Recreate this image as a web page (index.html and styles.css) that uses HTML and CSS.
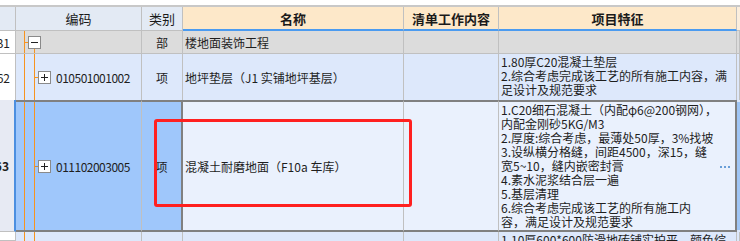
FILE: index.html
```html
<!DOCTYPE html>
<html lang="zh">
<head>
<meta charset="utf-8">
<title>清单</title>
<link rel="stylesheet" href="styles.css">
</head>
<body>
<div class="grid">
  <div class="cell hd"></div>
  <div class="cell hd">编码</div>
  <div class="cell hd">类别</div>
  <div class="cell hd warm">名称</div>
  <div class="cell hd warm">清单工作内容</div>
  <div class="cell hd warm">项目特征</div>
  <div class="cell hd edge"></div>

  <div class="cell num">B1</div>
  <div class="cell r1 code lvl1"><span class="link link1"></span><svg class="tbox" width="13" height="13" viewBox="0 0 13 13"><rect x="0.5" y="0.5" width="12" height="12" fill="#fff" stroke="#8a8a8a"/><line x1="3" y1="6.5" x2="10" y2="6.5" stroke="#222"/></svg></div>
  <div class="cell r1 mid">部</div>
  <div class="cell r1 name">楼地面装饰工程</div>
  <div class="cell r1"></div>
  <div class="cell r1"></div>
  <div class="cell r1"></div>

  <div class="cell num r2n">62</div>
  <div class="cell r2 code lvl2"><span class="link link2"></span><svg class="tbox" width="13" height="13" viewBox="0 0 13 13"><rect x="0.5" y="0.5" width="12" height="12" fill="#fff" stroke="#8a8a8a"/><line x1="3" y1="6.5" x2="10" y2="6.5" stroke="#222"/><line x1="6.5" y1="3" x2="6.5" y2="10" stroke="#222"/></svg><span class="codetxt">010501001002</span></div>
  <div class="cell r2 mid">项</div>
  <div class="cell r2 name">地坪垫层（J1 实铺地坪基层）</div>
  <div class="cell r2"></div>
  <div class="cell r2 feat">1.80厚C20混凝土垫层<br>2.综合考虑完成该工艺的所有施工内容，满<br>足设计及规范要求</div>
  <div class="cell r2"></div>

  <div class="cell num r3n">63</div>
  <div class="cell r3 sel code lvl2"><span class="link link2"></span><svg class="tbox" width="13" height="13" viewBox="0 0 13 13"><rect x="0.5" y="0.5" width="12" height="12" fill="#fff" stroke="#8a8a8a"/><line x1="3" y1="6.5" x2="10" y2="6.5" stroke="#222"/><line x1="6.5" y1="3" x2="6.5" y2="10" stroke="#222"/></svg><span class="codetxt">011102003005</span></div>
  <div class="cell r3 sel mid selend">项</div>
  <div class="cell r3 name">混凝土耐磨地面（F10a 车库）</div>
  <div class="cell r3"></div>
  <div class="cell r3 feat rowend">1.C20细石混凝土（内配φ6@200钢网），<br>内配金刚砂5KG/M3<br>2.厚度:综合考虑，最薄处50厚，3%找坡<br>3.设纵横分格缝，间距4500，深15，缝<br>宽5~10，缝内嵌密封膏<br>4.素水泥浆结合层一遍<br>5.基层清理<br>6.综合考虑完成该工艺的所有施工内<br>容，满足设计及规范要求<svg class="more" width="10" height="2" viewBox="0 0 10 2"><rect x="0" y="0" width="2" height="2" fill="#6a9fd8"/><rect x="4" y="0" width="2" height="2" fill="#6a9fd8"/><rect x="8" y="0" width="2" height="2" fill="#6a9fd8"/></svg></div>
  <div class="cell r3edge"></div>

  <div class="cell num"></div>
  <div class="cell r4 code lvl2"></div>
  <div class="cell r4"></div>
  <div class="cell r4"></div>
  <div class="cell r4"></div>
  <div class="cell r4 feat">1.10厚600*600防滑地砖铺实拍平，颜色综</div>
  <div class="cell r4"></div>
</div>
<div class="mark"></div>
</body>
</html>
```

FILE: styles.css
```css
body {
  margin: 0;
  width: 740px;
  height: 241px;
  overflow: hidden;
  position: relative;
  background: #ffffff;
  font-family: "Noto Sans CJK SC", sans-serif;
  font-size: 12px;
  color: #1e1e1e;
}

.grid {
  margin-top: 5px;
  border-top: 2px solid #c8c8c8;
  display: grid;
  grid-template-columns: 16px 126px 41px 221px 95px 238px 1fr;
  grid-template-rows: 24px 23px 46px 132px 9px;
}

.cell {
  box-sizing: border-box;
  border-right: 1px solid #c0c0c0;
  border-bottom: 1px solid #c0c0c0;
  overflow: hidden;
  white-space: nowrap;
  display: flex;
  align-items: center;
  min-width: 0;
}

.hd {
  background: #e3eaf4;
  justify-content: center;
  font-size: 13px;
  color: #1a1a1a;
}

.hd.warm {
  background: #fde8c9;
  border-bottom: 2px solid #4b9bf0;
  font-weight: bold;
}

.hd.edge {
  background: #fbeedd;
  border-right: none;
}

.num {
  background: #ffffff;
  justify-content: flex-end;
  padding-right: 5px;
  font-size: 12px;
}

.r2n {
  border-bottom: none;
}

.r3n {
  background: #e7eaf3;
  border-right: 2px solid #4c8fe0;
  font-weight: bold;
}

.r1 { background: #dcdcdc; }
.r2 { background: #dde8fb; border-bottom: none; }
.r4 { background: #dde8fb; border-bottom: none; }

.r3 {
  background: #eaf1fd;
  border-top: 2px solid #808080;
  border-bottom: 2px solid #808080;
}

.r3.sel { background-color: #9fc7fb; }

.selend { border-right: 2px solid #808080; }
.rowend { border-right: 2px solid #808080; }

.r3edge {
  background: #9fc5f5;
  border-right: none;
  border-top: 2px solid #dde8fb;
  border-bottom: 2px solid #dde8fb;
}

.mid { justify-content: center; }

.name { padding-left: 2px; }

.code {
  background-repeat: no-repeat;
}

.lvl1 {
  background-image: linear-gradient(#f7931e, #f7931e), linear-gradient(#f7931e, #f7931e);
  background-size: 1px 100%, 1px 100%;
  background-position: 8px 0, 18px 16px;
  padding-left: 9px;
}

.lvl2 {
  background-image: linear-gradient(#f7931e, #f7931e), linear-gradient(#f7931e, #f7931e);
  background-size: 1px 100%, 1px 100%;
  background-position: 8px 0, 18px 0;
  padding-left: 19px;
}

.r3.lvl2 {
  background-size: 1px 140%, 1px 140%;
  background-position: 8px -10px, 18px -10px;
}

.link {
  display: block;
  width: 3px;
  height: 1px;
  background: #f7931e;
  flex: none;
}

.r3 .link { background: #c08a50; }

.tbox {
  display: block;
  flex: none;
}

.codetxt {
  margin-left: 5px;
  letter-spacing: -0.5px;
}

.feat {
  display: block;
  position: relative;
  padding: 1px 2px;
  line-height: 14px;
}

.more {
  position: absolute;
  right: 5px;
  top: 64px;
}

.mark {
  position: absolute;
  left: 154px;
  top: 119px;
  width: 258px;
  height: 88px;
  box-sizing: border-box;
  border: 3px solid #ff2020;
  border-radius: 3px;
}
```
